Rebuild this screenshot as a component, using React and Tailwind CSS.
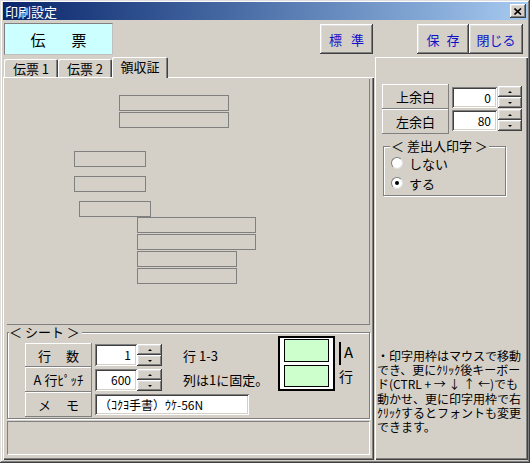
import React from 'react';

const RAISED = 'shadow-[inset_-1px_-1px_#404040,inset_1px_1px_#ffffff,inset_-2px_-2px_#808080,inset_2px_2px_#dfdfdf]';
const THIN = 'shadow-[inset_-1px_-1px_#808080,inset_1px_1px_#ffffff]';
const SUNKEN = 'shadow-[inset_1px_1px_#808080,inset_-1px_-1px_#ffffff,inset_2px_2px_#404040,inset_-2px_-2px_#d4d0c8]';
const PANEL = 'shadow-[inset_1px_1px_#ffffff,inset_-1px_-1px_#404040,inset_-2px_-2px_#808080]';
const ETCHED = 'border border-[#808080] shadow-[1px_1px_0_#ffffff,inset_1px_1px_0_#ffffff]';

// layout rectangles on the print canvas
const frames = [
  { x: 112, y: 16, w: 110 },
  { x: 112, y: 33, w: 110 },
  { x: 67, y: 72, w: 72 },
  { x: 67, y: 97, w: 72 },
  { x: 72, y: 122, w: 72 },
  { x: 130, y: 138, w: 119 },
  { x: 130, y: 155, w: 119 },
  { x: 130, y: 172, w: 100 },
  { x: 130, y: 189, w: 100 },
];

const Arrow = ({ up }) => (
  <svg width="4" height="2" viewBox="0 0 4 2">
    <path d={up ? 'M2 0L4 2H0Z' : 'M0 0H4L2 2Z'} fill="#000" />
  </svg>
);

const Spin = ({ className }) => (
  <div className={`flex flex-col ${className}`}>
    <div className={`flex-1 flex items-center justify-center bg-[#d4d0c8] ${RAISED}`}><Arrow up /></div>
    <div className={`flex-1 flex items-center justify-center bg-[#d4d0c8] ${RAISED}`}><Arrow /></div>
  </div>
);

const Field = ({ className, children, left }) => (
  <div className={`bg-white ${SUNKEN} flex items-center text-[12px] leading-none whitespace-nowrap ${left ? 'justify-start pl-[4px]' : 'justify-end pr-[6px]'} ${className}`}>
    {children}
  </div>
);

const Label = ({ className, children }) => (
  <div className={`bg-[#d4d0c8] ${THIN} flex items-center justify-center text-[13px] leading-none whitespace-nowrap ${className}`}>
    {children}
  </div>
);

const Radio = ({ checked, children }) => (
  <div className="flex items-center h-[20px] pl-[7px]">
    <div className="w-[12px] h-[12px] rounded-full bg-white border border-t-[#808080] border-l-[#808080] border-r-[#dfdfdf] border-b-[#dfdfdf] flex items-center justify-center">
      {checked && <div className="w-[4px] h-[4px] rounded-full bg-black" />}
    </div>
    <span className="ml-[6px] text-[13px] leading-none">{children}</span>
  </div>
);

const Tab = ({ className, active, children }) => (
  <div
    className={`flex items-center justify-center text-[13px] leading-none rounded-t-[2px] bg-[#d4d0c8] shadow-[inset_1px_1px_#ffffff,inset_-1px_0_#404040,inset_-2px_0_#808080] ${
      active ? 'h-[21px] mb-[-1px] relative z-10 pb-[2px]' : 'h-[18px]'
    } ${className}`}
  >
    {children}
  </div>
);

export default function App() {
  return (
    <div className={`w-[530px] h-[463px] bg-[#d4d0c8] overflow-hidden pl-[3px] pr-[2px] pt-[2px] text-black font-['Noto_Sans_CJK_JP','Liberation_Sans',sans-serif] shadow-[inset_-1px_-1px_#404040,inset_1px_1px_#dfdfdf,inset_-2px_-2px_#808080,inset_2px_2px_#ffffff]`}>
      {/* title bar */}
      <div className="h-[18px] flex items-center justify-between pl-[2px] pr-[2px] bg-gradient-to-r from-[#0a246a] to-[#a6caf0]">
        <span className="text-white text-[13px] leading-none">印刷設定</span>
        <div className={`w-[16px] h-[14px] bg-[#d4d0c8] ${RAISED} flex items-center justify-center`}>
          <svg width="8" height="7" viewBox="0 0 8 7">
            <path d="M0.5 0.5L7 6.5M7 0.5L0.5 6.5" stroke="#000" strokeWidth="1.6" />
          </svg>
        </div>
      </div>

      {/* toolbar */}
      <div className="h-[37px] flex items-start pt-[3px]">
        <div className="ml-[1px] w-[109px] h-[32px] bg-[#ccffff] border border-t-[#808080] border-l-[#808080] border-r-[#c0c0c0] border-b-[#c0c0c0] flex items-center justify-center gap-[26px] text-[15px] leading-none">
          <span>伝</span>
          <span>票</span>
        </div>
        <div className={`ml-[207px] mt-[1px] w-[53px] h-[30px] ${RAISED} flex items-center justify-center gap-[9px] text-[13px] leading-none text-[#1010c8]`}>
          <span>標</span><span>準</span>
        </div>
        <div className={`ml-[44px] mt-[1px] w-[52px] h-[30px] ${RAISED} flex items-center justify-center gap-[7px] text-[13px] leading-none text-[#1010c8]`}>
          <span>保</span><span>存</span>
        </div>
        <div className={`mt-[1px] w-[54px] h-[30px] ${RAISED} flex items-center justify-center text-[13px] leading-none text-[#1010c8]`}>
          閉じる
        </div>
      </div>

      {/* main */}
      <div className="flex h-[403px]">
        {/* left: tabs */}
        <div className="w-[371px] flex flex-col">
          <div className="h-[20px] flex items-end pl-[1px]">
            <Tab className="w-[54px]">伝票 1</Tab>
            <Tab className="w-[54px]">伝票 2</Tab>
            <Tab className="w-[56px]" active>領収証</Tab>
          </div>
          <div className={`h-[383px] pl-[4px] pt-[2px] ${PANEL}`}>
            {/* print canvas */}
            <div className="relative w-[363px] h-[246px] border-r border-b border-[#808080]">
              {frames.map((f, i) => (
                <div
                  key={i}
                  className="absolute h-[16px] border border-[#808080]"
                  style={{ left: f.x, top: f.y, width: f.w }}
                />
              ))}
            </div>

            {/* sheet group */}
            <div className={`relative mt-[7px] w-[363px] h-[87px] ${ETCHED}`}>
              <span className="absolute left-[1px] top-[-8px] bg-[#d4d0c8] pr-[2px] text-[13px] leading-[14px]">＜ シート ＞</span>
              <div className="flex pt-[3px]">
                <div className="w-[270px] shrink-0 pl-[17px] mt-[7px] flex flex-col">
                  <div className="h-[24px] flex items-start">
                    <Label className="w-[67px] h-[24px] gap-[15px]"><span>行</span><span>数</span></Label>
                    <Field className="ml-[3px] mt-[1px] w-[42px] h-[22px]">1</Field>
                    <Spin className="w-[25px] h-[22px] mt-[1px]" />
                    <span className="ml-[21px] self-center text-[13px] leading-none whitespace-nowrap">行 1-3</span>
                  </div>
                  <div className="h-[25px] flex items-start">
                    <Label className="w-[67px] h-[25px] text-[12px]">A 行ﾋﾟｯﾁ</Label>
                    <Field className="ml-[3px] mt-[2px] w-[42px] h-[22px]">600</Field>
                    <Spin className="w-[25px] h-[22px] mt-[2px]" />
                    <span className="ml-[21px] self-center text-[13px] leading-none whitespace-nowrap">列は1に固定。</span>
                  </div>
                  <div className="h-[25px] flex items-start">
                    <Label className="w-[67px] h-[25px] gap-[15px]"><span>メ</span><span>モ</span></Label>
                    <Field left className="ml-[3px] mt-[2px] w-[154px] h-[21px]">（ｺｸﾖ手書）ｳｹ-56N</Field>
                  </div>
                </div>
                {/* sheet preview */}
                <div className="w-[57px] h-[55px] shrink-0 border-2 border-black bg-white flex flex-col items-center pt-[1px] gap-[3px]">
                  <div className="w-[45px] h-[23px] border border-black bg-[#ccffcc]" />
                  <div className="w-[45px] h-[22px] border border-black bg-[#ccffcc]" />
                </div>
                <div className="ml-[4px] flex flex-col">
                  <div className="flex items-start mt-[6px]">
                    <div className="w-[2px] h-[23px] bg-black" />
                    <span className="ml-[3px] mt-[2px] text-[15px] leading-none">A</span>
                  </div>
                  <span className="mt-[4px] text-[14px] leading-none">行</span>
                </div>
              </div>
            </div>

            {/* status */}
            <div className="mt-[2px] w-[363px] h-[34px] border border-t-[#808080] border-l-[#808080] border-r-white border-b-white" />
          </div>
        </div>

        {/* right panel */}
        <div className={`ml-[1px] w-[153px] h-[403px] pl-[7px] pt-[27px] ${PANEL}`}>
          <div className="h-[25px] flex items-start">
            <Label className="w-[67px] h-[25px]">上余白</Label>
            <Field className="ml-[3px] mt-[3px] w-[45px] h-[21px]">0</Field>
            <Spin className="ml-[1px] mt-[2px] w-[24px] h-[22px]" />
          </div>
          <div className="h-[25px] flex items-start">
            <Label className="w-[67px] h-[25px]">左余白</Label>
            <Field className="ml-[3px] mt-[1px] w-[45px] h-[21px]">80</Field>
            <Spin className="ml-[1px] mt-[0px] w-[24px] h-[22px]" />
          </div>
          <div className={`relative mt-[12px] ml-[1px] w-[123px] h-[50px] ${ETCHED} pt-[6px]`}>
            <span className="absolute left-[6px] top-[-8px] bg-[#d4d0c8] px-[1px] text-[13px] leading-[14px]">＜ 差出人印字 ＞</span>
            <Radio>しない</Radio>
            <Radio checked>する</Radio>
          </div>
          <div className="ml-[-5px] mt-[153px] text-[12px] leading-[14.2px] whitespace-nowrap">
            <div>・印字用枠はマウスで移動</div>
            <div>でき、更にｸﾘｯｸ後キーボー</div>
            <div>ド(CTRL + → ↓ ↑ ←)でも</div>
            <div>動かせ、更に印字用枠で右</div>
            <div>ｸﾘｯｸするとフォントも変更</div>
            <div>できます。</div>
          </div>
        </div>
      </div>
    </div>
  );
}
